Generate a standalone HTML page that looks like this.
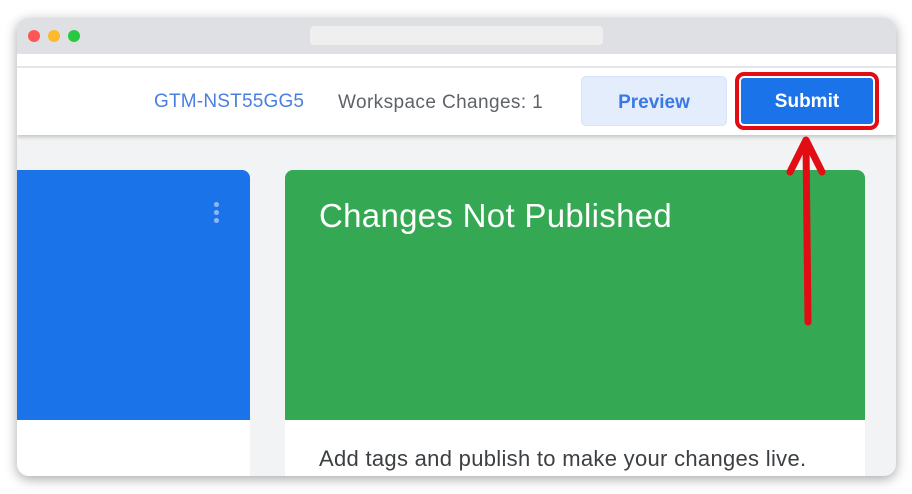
<!DOCTYPE html><html><head><style>
body{margin:0;width:912px;height:494px;background:#fff;position:relative;overflow:hidden;font-family:"Liberation Sans",sans-serif}
.win{position:absolute;left:17px;top:18px;width:879px;height:458px;border-radius:12px;overflow:hidden;background:#f1f3f4;box-shadow:0 3px 12px rgba(0,0,0,.35)}
.tb{position:absolute;left:0;top:0;width:100%;height:36px;background:#dfe0e4}
.dot{position:absolute;top:12px;width:12px;height:12px;border-radius:50%}
.addr{position:absolute;left:293px;top:8px;width:293px;height:19px;background:#efefef;border-radius:4px}
.strip{position:absolute;left:0;top:36px;width:100%;height:12px;background:#fff;border-bottom:2px solid #e8eaed}
.hdr{position:absolute;left:0;top:50px;width:100%;height:67px;background:#fff;box-shadow:0 2px 4px rgba(0,0,0,.2)}
.t{position:absolute;font-size:19px;white-space:nowrap}
</style></head><body>
<div class="win">
<div class="tb"><div class="dot" style="left:11px;background:#fd5656"></div><div class="dot" style="left:31px;background:#fdba2c"></div><div class="dot" style="left:51px;background:#27c93f"></div><div class="addr"></div></div>
<div class="strip"></div>
<div class="hdr">
<div class="t" style="left:137px;top:23px;color:#4a7fe0;letter-spacing:0.2px">GTM-NST55GG5</div>
<div class="t" style="left:321px;top:24px;color:#5f6368;letter-spacing:0.4px">Workspace Changes: 1</div>
<div style="position:absolute;left:564px;top:8px;width:146px;height:50px;background:#e3edfb;border:1px solid #d8e3f5;border-radius:5px;box-sizing:border-box;color:#3b78e7;font-size:19px;font-weight:bold;text-align:center;line-height:52px">Preview</div>
<div style="position:absolute;left:718px;top:4px;width:144px;height:58px;border:4px solid #e20c14;border-radius:9px;box-sizing:border-box;padding:2px"><div style="background:#1a73e8;height:100%;border-radius:3px;color:#fff;font-size:19px;font-weight:bold;text-align:center;line-height:48px">Submit</div></div>
</div>
<div style="position:absolute;left:0;top:152px;width:233px;height:306px;background:#fff;border-radius:0 8px 0 0;overflow:hidden"><div style="height:250px;background:#1a73e8"></div>
<div style="position:absolute;left:197px;top:32px">
<div style="width:5px;height:5px;border-radius:50%;background:#8fb8f5;margin-bottom:3px"></div><div style="width:5px;height:5px;border-radius:50%;background:#8fb8f5;margin-bottom:3px"></div><div style="width:5px;height:5px;border-radius:50%;background:#8fb8f5"></div></div></div>
<div style="position:absolute;left:268px;top:152px;width:580px;height:306px;background:#fff;border-radius:8px 8px 0 0;overflow:hidden"><div style="height:250px;background:#34a853"></div>
<div style="position:absolute;left:34px;top:27px;color:#fff;font-size:33px;letter-spacing:0.3px;white-space:nowrap">Changes Not Published</div>
<div style="position:absolute;left:34px;top:276px;color:#3c4043;font-size:22px;letter-spacing:0.3px;white-space:nowrap">Add tags and publish to make your changes live.</div></div>
</div>
<svg style="position:absolute;left:0;top:0" width="912" height="494"><g stroke="#e20c14" stroke-width="7" stroke-linecap="round" stroke-linejoin="round" fill="none"><path d="M808 322 L806 144"/><path d="M790 172 L806 140 L822 172"/></g></svg>
</body></html>
